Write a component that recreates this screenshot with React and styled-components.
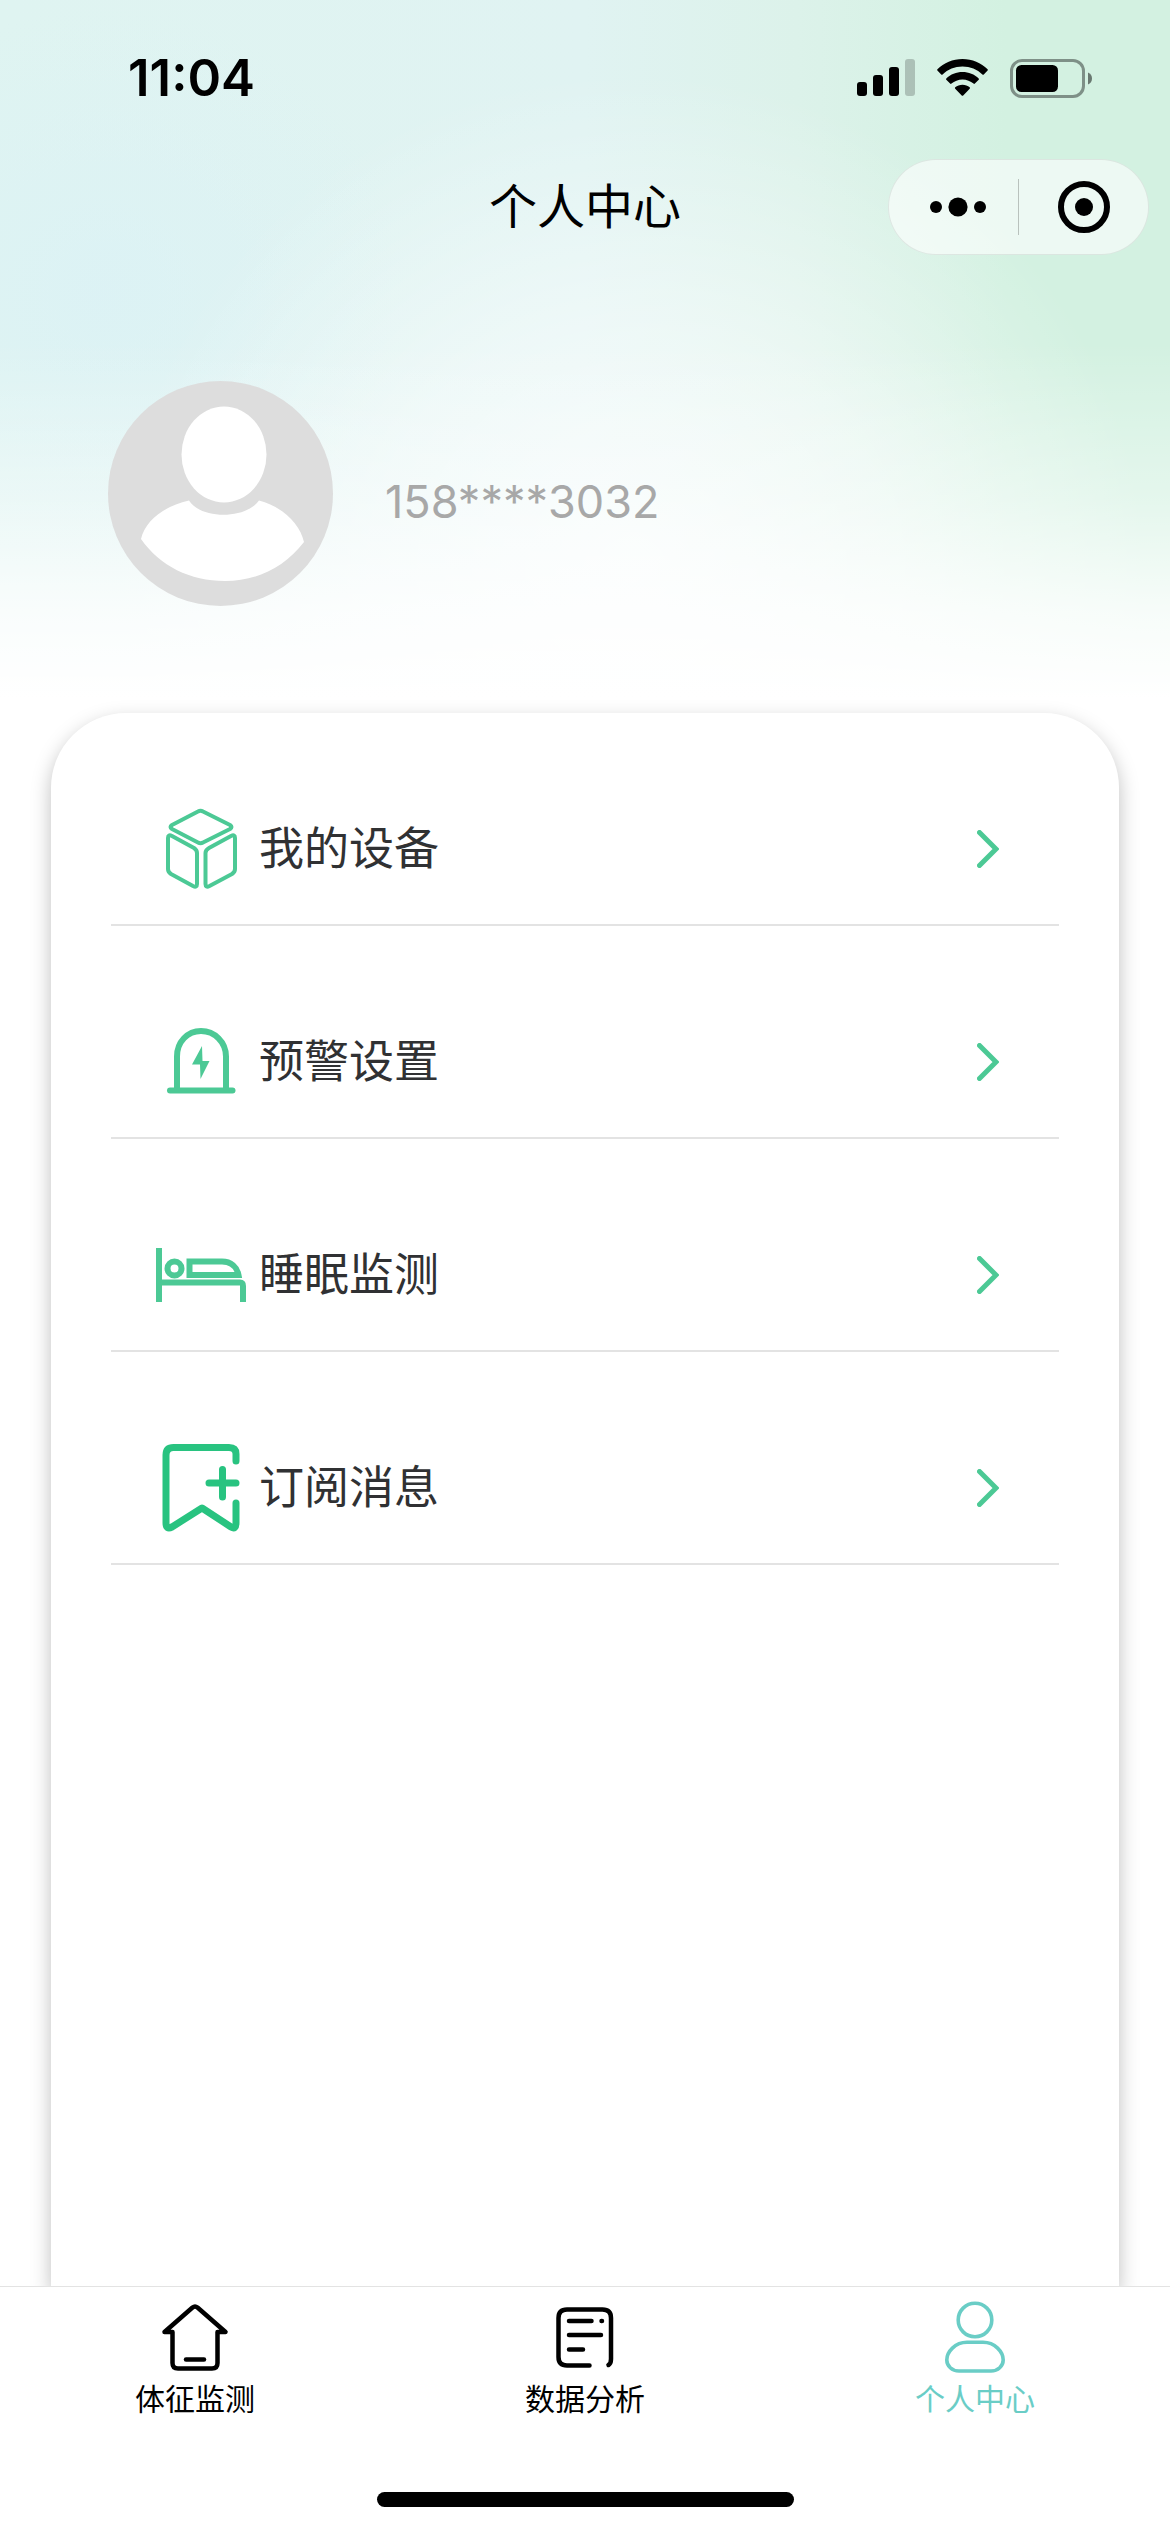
import React, { useState } from "react";
import styled, { createGlobalStyle } from "styled-components";

const GlobalStyle = createGlobalStyle`
  * {
    box-sizing: border-box;
  }
  body {
    margin: 0;
    background: #fff;
    font-family: Inter, "Noto Sans CJK SC", sans-serif;
  }
  button {
    padding: 0;
    border: 0;
    background: none;
    font: inherit;
    color: inherit;
    cursor: pointer;
  }
  svg {
    display: block;
    flex-shrink: 0;
  }
`;

const Page = styled.div`
  min-height: 100vh;
  display: flex;
  flex-direction: column;
`;

const Header = styled.header`
  background:
    linear-gradient(to bottom, rgba(255, 255, 255, 0) 48%, rgba(255, 255, 255, 0.4) 70%, rgba(255, 255, 255, 0.82) 86%, #fff 98%),
    radial-gradient(ellipse 44% 70% at 54% 80%, rgba(255, 255, 255, 0.75), rgba(255, 255, 255, 0.45) 50%, rgba(255, 255, 255, 0)),
    radial-gradient(ellipse 26% 40% at 9% 41%, rgba(218, 241, 247, 0.6), rgba(218, 241, 247, 0)),
    linear-gradient(to right, #dff4f1 0%, #e0f3f2 50%, #dcf2ea 68%, #d3f1e1 86%, #d3f1e1 100%);
`;

const StatusBar = styled.div`
  height: 156px;
  padding: 0 78px 0 128px;
  display: flex;
  align-items: center;
  justify-content: space-between;
`;
const Time = styled.span`
  font-size: 51px;
  font-weight: 600;
  line-height: 60px;
  color: #000;
`;
const StatusIcons = styled.div`
  display: flex;
  align-items: center;
  gap: 22px;
`;

const NavBar = styled.div`
  height: 102px;
  padding: 0 21px;
  display: grid;
  grid-template-columns: 1fr auto 1fr;
  align-items: center;
`;
const NavTitle = styled.h1`
  grid-column: 2;
  margin: 0;
  font-size: 48px;
  font-weight: 400;
  line-height: 72px;
  color: #000;
`;
const Capsule = styled.div`
  justify-self: end;
  width: 261px;
  height: 96px;
  display: flex;
  align-items: center;
  border: 1px solid rgba(0, 0, 0, 0.08);
  border-radius: 48px;
  background: rgba(255, 255, 255, 0.6);
`;
const CapsuleButton = styled.button`
  flex: 1;
  height: 94px;
  display: flex;
  align-items: center;
  justify-content: center;
`;
const CapsuleLine = styled.span`
  width: 1px;
  height: 56px;
  background: rgba(0, 0, 0, 0.22);
`;

const Profile = styled.section`
  padding: 123px 108px 107px;
  display: flex;
  align-items: center;
  gap: 52px;
`;
const Phone = styled.span`
  padding-top: 16px;
  font-size: 45px;
  font-weight: 400;
  line-height: 56px;
  color: #a8a8a8;
`;

const Card = styled.main`
  flex: 1;
  margin: 0 51px;
  padding: 0 60px;
  border-radius: 75px 75px 0 0;
  background: #fff;
  box-shadow: 0 8px 20px rgba(0, 0, 0, 0.26);
`;
const MenuItem = styled.button`
  width: 100%;
  height: 213px;
  padding: 61px 60px 0 45px;
  display: flex;
  align-items: center;
  border-bottom: 2px solid #e3e3e3;
  color: #303133;
`;
const MenuIcon = styled.span`
  width: 90px;
  display: flex;
  justify-content: center;
`;
const MenuText = styled.span`
  flex: 1;
  margin-left: 13px;
  font-size: 45px;
  line-height: 66px;
  text-align: left;
`;

const TabBar = styled.nav`
  position: relative;
  height: 246px;
  display: flex;
  border-top: 1px solid #e3e3e3;
  background: #fff;
`;
const Tab = styled.a`
  flex: 1;
  padding-top: 12px;
  display: flex;
  flex-direction: column;
  align-items: center;
  font-size: 30px;
  line-height: 44px;
  text-decoration: none;
  color: ${(props) => (props.$active ? "#6acdc6" : "#000")};
`;
const TabIcon = styled.span`
  height: 78px;
`;
const HomeIndicator = styled.span`
  position: absolute;
  left: 50%;
  bottom: 25px;
  width: 417px;
  height: 15px;
  margin-left: -208px;
  border-radius: 8px;
  background: #000;
`;

const GREEN = "#4cc995";

const SignalIcon = () => (
  <svg width="58" height="38" viewBox="0 0 58 38">
    <rect x="0" y="23" width="10" height="14" rx="3" />
    <rect x="16" y="16" width="10" height="21" rx="3" />
    <rect x="32" y="8" width="10" height="29" rx="3" />
    <rect x="48" y="0" width="10" height="37" rx="3" opacity="0.2" />
  </svg>
);

const WifiIcon = () => (
  <svg width="51" height="38" viewBox="0 0 51 38">
    <path d="M25.500 0C15.800 0 6.900 3.900.400 10.200c-.4.400-.4 1 0 1.400l3.800 3.800c.4.400 1 .4 1.400 0C10.800 10.500 17.800 7.500 25.500 7.500s14.700 3 19.900 7.900c.4.400 1 .4 1.400 0l3.800-3.800c.4-.4.4-1 0-1.400C44.100 3.900 35.200 0 25.500 0z" />
    <path d="M25.500 13c-6.200 0-11.900 2.400-16.200 6.400-.4.400-.4 1 0 1.400l3.800 3.800c.4.400 1 .4 1.400 0 2.900-2.600 6.800-4.200 11-4.200s8.100 1.600 11 4.200c.4.400 1 .4 1.400 0l3.800-3.800c.4-.4.4-1 0-1.400C37.400 15.400 31.700 13 25.500 13z" />
    <path d="M25.500 25.700c-2.800 0-5.300 1-7.300 2.600-.4.400-.4 1 0 1.400l6.500 6.800c.4.400 1.100.4 1.500 0l6.500-6.800c.4-.4.400-1 0-1.400-1.900-1.600-4.500-2.600-7.200-2.600z" />
  </svg>
);

const BatteryIcon = () => (
  <svg width="82" height="39" viewBox="0 0 82 39">
    <rect x="1.500" y="1.500" width="72" height="36" rx="10.500" fill="none" stroke="#000" strokeWidth="3" opacity="0.4" />
    <rect x="6" y="6" width="42" height="27" rx="5.500" />
    <path d="M78 13.500c2.500 1 4 3.300 4 6s-1.500 5-4 6z" opacity="0.5" />
  </svg>
);

const MoreIcon = () => (
  <svg width="64" height="20" viewBox="0 0 64 20">
    <circle cx="14" cy="10" r="6" />
    <circle cx="36" cy="10" r="9.600" />
    <circle cx="58" cy="10" r="6" />
  </svg>
);

const TargetIcon = () => (
  <svg width="52" height="52" viewBox="0 0 52 52">
    <circle cx="26" cy="26" r="23" fill="none" stroke="#000" strokeWidth="6" />
    <circle cx="26" cy="26" r="9" />
  </svg>
);

const Avatar = () => (
  <svg width="225" height="225" viewBox="0 0 225 225">
    <circle cx="112.500" cy="112.500" r="112.500" fill="#ddd" />
    <ellipse cx="116" cy="73.500" rx="42.500" ry="48" fill="#fff" />
    <path d="M33 158C37 140 56 125 81 119.500C92 138 137 139 151 119.500C175 126 192 143 196 161C176 187 148 200 117 200C82 200 52 185 33 158Z" fill="#fff" />
  </svg>
);

const CubeIcon = () => (
  <svg width="90" height="90" viewBox="0 0 90 90" fill="none" stroke={GREEN} strokeWidth="4" strokeLinejoin="round">
    <path d="M42 7.500Q44.500 6 47 7.500L74 21Q77 23 74 25L47 38.500Q44.500 40 42 38.500L16 25Q13 23 16 21Z" />
    <path d="M12 34Q12 30 16 32L38 44Q41 46 41 49V80Q41 84 37 82L15 70Q12 68 12 65Z" />
    <path d="M79 34Q79 30 75 32L53 44Q49.500 46 49.500 49V80Q49.500 84 53.500 82L76 70Q79 68 79 65Z" />
  </svg>
);

const AlarmIcon = () => (
  <svg width="90" height="90" viewBox="0 0 90 90" fill="none" stroke={GREEN} strokeWidth="6">
    <path d="M21 72V39.500C21 25 31.500 14 45 14S70 25 70 39.500V72" />
    <path d="M14 73.500H76.500" strokeLinecap="round" />
    <path d="M46 29L36 47.500H44L44.500 62L53.500 44H46.500Z" fill={GREEN} stroke="none" />
  </svg>
);

const BedIcon = () => (
  <svg width="90" height="90" viewBox="0 0 90 90" fill="none" stroke={GREEN} strokeWidth="6">
    <path d="M3 18V72" />
    <path d="M3 52.500H84Q87 52.500 87 56V72" />
    <circle cx="18.500" cy="38.500" r="7" />
    <path d="M33.500 31.500H66C75 31.500 81 37 82.500 45H33.500Z" />
  </svg>
);

const SubscribeIcon = () => (
  <svg width="90" height="90" viewBox="0 0 90 90" fill="none" stroke="#28c380" strokeWidth="7" strokeLinecap="round" strokeLinejoin="round">
    <path d="M80 18V11Q80 4.500 73 4.500H17.500Q10 4.500 10 12V80Q10 87 16 84L46 65L75 84Q80 87 80 80V60" />
    <path d="M66.500 26.500V54M53 40H80" />
  </svg>
);

const ArrowIcon = () => (
  <svg width="22" height="38" viewBox="0 0 22 38" fill="none" stroke={GREEN} strokeWidth="5" strokeLinecap="round">
    <path d="M2.500 2.500L19 19L2.500 35.500" />
  </svg>
);

const HomeIcon = () => (
  <svg width="78" height="78" viewBox="0 0 78 78" fill="none" stroke="currentColor" strokeWidth="4.500" strokeLinecap="round" strokeLinejoin="round">
    <path d="M16.500 33H8.500L36.500 8.500Q39 6.500 41.500 8.500L69.500 33H61.500V64Q61.500 69.500 56 69.500H22Q16.500 69.500 16.500 64Z" />
    <path d="M30 60.500H48" />
  </svg>
);

const ReportIcon = () => (
  <svg width="78" height="78" viewBox="0 0 78 78" fill="none" stroke="currentColor" strokeWidth="4.500" strokeLinecap="round">
    <path d="M43.500 66.500H21Q12.500 66.500 12.500 58V19Q12.500 10.500 21 10.500H56.500Q65 10.500 65 19V60Q65 64.500 62.500 66" />
    <path d="M23 22H45.500M55.500 22H56M23 36H55M23 50.500H37" />
  </svg>
);

const UserIcon = () => (
  <svg width="78" height="78" viewBox="0 0 78 78" fill="none" stroke="currentColor" strokeWidth="3.600">
    <circle cx="39" cy="21" r="16.800" />
    <path d="M31 43.300H47C59 43.300 67.200 53 67.200 61C67.200 67 62 72 55 72H23C16 72 10.800 67 10.800 61C10.800 53 19 43.300 31 43.300Z" />
  </svg>
);

const menus = [
  { text: "我的设备", Icon: CubeIcon },
  { text: "预警设置", Icon: AlarmIcon },
  { text: "睡眠监测", Icon: BedIcon },
  { text: "订阅消息", Icon: SubscribeIcon },
];

const tabs = [
  { id: "monitor", text: "体征监测", Icon: HomeIcon },
  { id: "analysis", text: "数据分析", Icon: ReportIcon },
  { id: "mine", text: "个人中心", Icon: UserIcon },
];

const App = () => {
  const [current, setCurrent] = useState("mine");

  return (
    <Page>
      <GlobalStyle />
      <Header>
        <StatusBar>
          <Time>11:04</Time>
          <StatusIcons>
            <SignalIcon />
            <WifiIcon />
            <BatteryIcon />
          </StatusIcons>
        </StatusBar>
        <NavBar>
          <NavTitle>个人中心</NavTitle>
          <Capsule>
            <CapsuleButton aria-label="更多">
              <MoreIcon />
            </CapsuleButton>
            <CapsuleLine />
            <CapsuleButton aria-label="关闭">
              <TargetIcon />
            </CapsuleButton>
          </Capsule>
        </NavBar>
        <Profile>
          <Avatar />
          <Phone>158****3032</Phone>
        </Profile>
      </Header>
      <Card>
        {menus.map(({ text, Icon }) => (
          <MenuItem key={text}>
            <MenuIcon>
              <Icon />
            </MenuIcon>
            <MenuText>{text}</MenuText>
            <ArrowIcon />
          </MenuItem>
        ))}
      </Card>
      <TabBar>
        {tabs.map(({ id, text, Icon }) => (
          <Tab key={id} href={`#${id}`} $active={current === id} onClick={() => setCurrent(id)}>
            <TabIcon>
              <Icon />
            </TabIcon>
            {text}
          </Tab>
        ))}
        <HomeIndicator />
      </TabBar>
    </Page>
  );
};

export default App;
